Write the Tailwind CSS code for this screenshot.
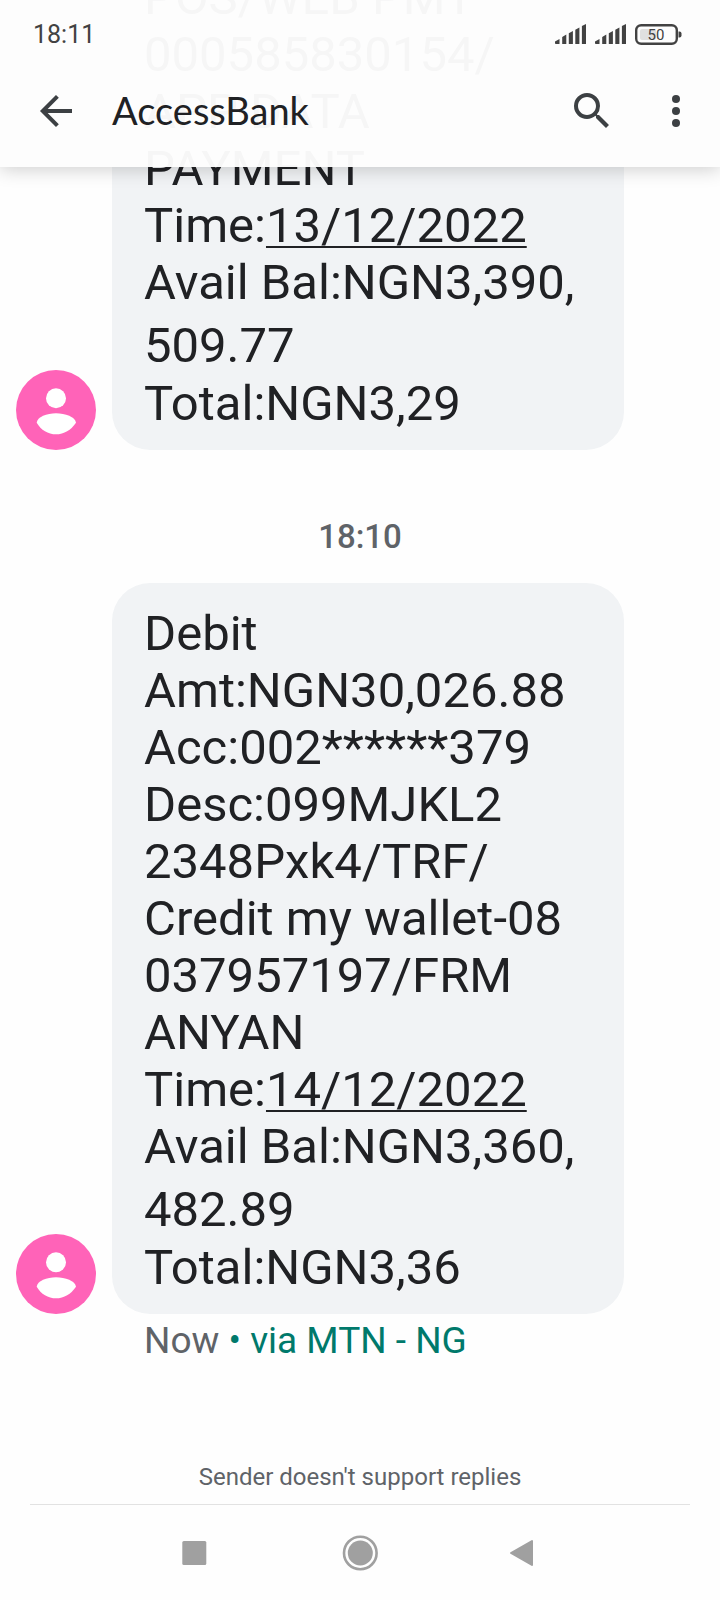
<!DOCTYPE html>
<html lang="en">
<head>
<meta charset="utf-8">
<meta name="viewport" content="width=device-width, initial-scale=1">
<title>AccessBank</title>
<script src="https://cdn.jsdelivr.net/npm/@tailwindcss/browser@4"></script>
</head>
<body class="bg-[#fefefe] text-[#202124] font-['Roboto',sans-serif]">
<div class="relative h-screen flex flex-col overflow-hidden">

  <header class="absolute inset-x-0 top-0 z-10 bg-[#fdfdfd]/97 shadow-[0_2px_18px_rgba(0,0,0,0.2)]">
    <div class="h-14 flex items-center justify-between pl-[33px] pr-[38px] pt-3 text-[#424242]">
      <span class="pt-0.5 text-[25px] leading-8">18:11</span>
      <div class="flex items-center gap-2">
        <svg class="w-8 h-5" viewBox="0 0 32 20" fill="currentColor" aria-hidden="true"><path d="M0 17.500 4.500 15V20H0.800Q0 20 0 19ZM7.200 13 11.300 10.600V20H7.200ZM13.800 9.300 17.900 7V20H13.800ZM20.300 5.800 24.400 3.500V20H20.300ZM26.900 2 31 0V20H26.900Z"/></svg>
        <svg class="w-8 h-5" viewBox="0 0 32 20" fill="currentColor" aria-hidden="true"><path d="M0 17.500 4.500 15V20H0.800Q0 20 0 19ZM7.200 13 11.300 10.600V20H7.200ZM13.800 9.300 17.900 7V20H13.800ZM20.300 5.800 24.400 3.500V20H20.300ZM26.900 2 31 0V20H26.900Z"/></svg>
        <svg class="w-[47px] h-[21px]" viewBox="0 0 47 21" role="img" aria-label="Battery 50 percent">
          <rect x="1.200" y="1.200" width="40.600" height="18.600" rx="5" fill="none" stroke="#424242" stroke-width="2.400"/>
          <rect x="5" y="5" width="16" height="11" rx="2" fill="#e0e0e0"/>
          <path d="M43.500 7.500h1q2 0 2 2v2q0 2-2 2h-1z" fill="#424242"/>
          <text x="21" y="15.500" text-anchor="middle" font-size="15" fill="#424242">50</text>
        </svg>
      </div>
    </div>
    <div class="h-[111px] flex items-center pl-8 pb-0.5">
      <button type="button" aria-label="Back" class="size-12 flex items-center justify-center">
        <svg class="size-12" viewBox="0 0 24 24" fill="none" stroke="#3c4043" stroke-width="2" aria-hidden="true"><path d="M20 12H5.500M12.700 4.700 5.400 12l7.300 7.300"/></svg>
      </button>
      <h1 class="flex-1 pl-8 pb-0.5 font-['Lato',sans-serif] text-[38px] leading-[46px]">AccessBank</h1>
      <button type="button" aria-label="Search" class="size-12 flex items-center justify-center">
        <svg class="size-12" viewBox="0 0 24 24" fill="#3c4043" aria-hidden="true"><path d="M15.500 14h-.790l-.280-.270A6.471 6.471 0 0 0 16 9.500 6.500 6.500 0 1 0 9.500 16c1.610 0 3.090-.590 4.230-1.570l.270.280v.790l5 4.990L20.490 19l-4.990-5zm-6 0C7.010 14 5 11.990 5 9.500S7.010 5 9.500 5 14 7.010 14 9.500 11.990 14 9.500 14z"/></svg>
      </button>
      <button type="button" aria-label="More options" class="ml-9 mr-5 size-12 flex items-center justify-center">
        <svg class="size-12" viewBox="0 0 24 24" fill="#3c4043" aria-hidden="true"><circle cx="12" cy="6" r="2"/><circle cx="12" cy="12" r="2"/><circle cx="12" cy="18" r="2"/></svg>
      </button>
    </div>
  </header>

  <main class="flex-1 min-h-0 overflow-hidden flex flex-col justify-end">
    <article class="shrink-0 flex items-end gap-4 pl-4 pr-24">
      <svg class="size-20 shrink-0" viewBox="0 0 80 80" role="img" aria-label="AccessBank"><circle cx="40" cy="40" r="40" fill="#ff63b8"/><circle cx="40" cy="28.200" r="10" fill="#fff"/><path fill="#fff" d="M20.700 52.700C21 47 31 43.200 40 43.200S59.500 47 60 52.700C55 60 48 64.300 40 64.300S25 60 20.700 52.700Z"/></svg>
      <div class="flex-1 rounded-b-[38px] bg-[#f1f3f5] px-8 pb-[18px] text-[49px] leading-[57px]">
        POS/WEB PMT<br>000585830154/<br>APP DATA<br>PAYMENT<br>Time:<a href="#" class="underline decoration-2 underline-offset-4 [text-decoration-skip-ink:none]">13/12/2022</a><br>Avail Bal:NGN3,390,<span class="block pt-[6px] pb-px">509.77</span>Total:NGN3,29
      </div>
    </article>

    <p class="shrink-0 pt-16 pb-6 text-center text-[33px] leading-[45px] font-medium text-[#5f6368]">18:10</p>

    <article class="shrink-0 flex items-end gap-4 pl-4 pr-24">
      <svg class="size-20 shrink-0" viewBox="0 0 80 80" role="img" aria-label="AccessBank"><circle cx="40" cy="40" r="40" fill="#ff63b8"/><circle cx="40" cy="28.200" r="10" fill="#fff"/><path fill="#fff" d="M20.700 52.700C21 47 31 43.200 40 43.200S59.500 47 60 52.700C55 60 48 64.300 40 64.300S25 60 20.700 52.700Z"/></svg>
      <div class="flex-1 rounded-[38px] bg-[#f1f3f5] px-8 pt-[22px] pb-[18px] text-[49px] leading-[57px]">
        Debit<br>Amt:NGN30,026.88<br>Acc:002******379<br>Desc:099MJKL2<br>2348Pxk4/TRF/<br>Credit my wallet-08<br>037957197/FRM<br>ANYAN<br>Time:<a href="#" class="underline decoration-2 underline-offset-4 [text-decoration-skip-ink:none]">14/12/2022</a><br>Avail Bal:NGN3,360,<span class="block pt-[6px] pb-px">482.89</span>Total:NGN3,36
      </div>
    </article>
    <p class="shrink-0 pl-36 pt-1 text-[37px] leading-[46px] text-[#5f6368]">Now <span class="text-[#00796b]">• via MTN - NG</span></p>
  </main>

  <footer class="shrink-0 pt-[97px]">
    <p class="text-center text-2xl leading-8 text-[#5f6368]">Sender doesn't support replies</p>
    <hr class="mx-[30px] mt-[11px] border-[#e2e2e2]">
    <nav class="h-[95px] flex items-center justify-center gap-[127px]">
      <button type="button" aria-label="Recent apps" class="size-9 flex items-center justify-center"><svg class="size-9" viewBox="0 0 36 36" fill="#a0a0a0" aria-hidden="true"><rect x="3.300" y="6" width="24" height="24" rx="1.500"/></svg></button>
      <button type="button" aria-label="Home" class="size-9 flex items-center justify-center"><svg class="size-9" viewBox="0 0 36 36" aria-hidden="true"><circle cx="18.300" cy="18" r="16.300" fill="none" stroke="#a0a0a0" stroke-width="2.600"/><circle cx="18.300" cy="18" r="12.500" fill="#a0a0a0"/></svg></button>
      <button type="button" aria-label="Back" class="size-9 flex items-center justify-center"><svg class="size-9" viewBox="0 0 36 36" fill="#a0a0a0" stroke="#a0a0a0" stroke-width="2" stroke-linejoin="round" aria-hidden="true"><path d="M6 18 27 6v24Z"/></svg></button>
    </nav>
  </footer>
</div>
</body>
</html>
